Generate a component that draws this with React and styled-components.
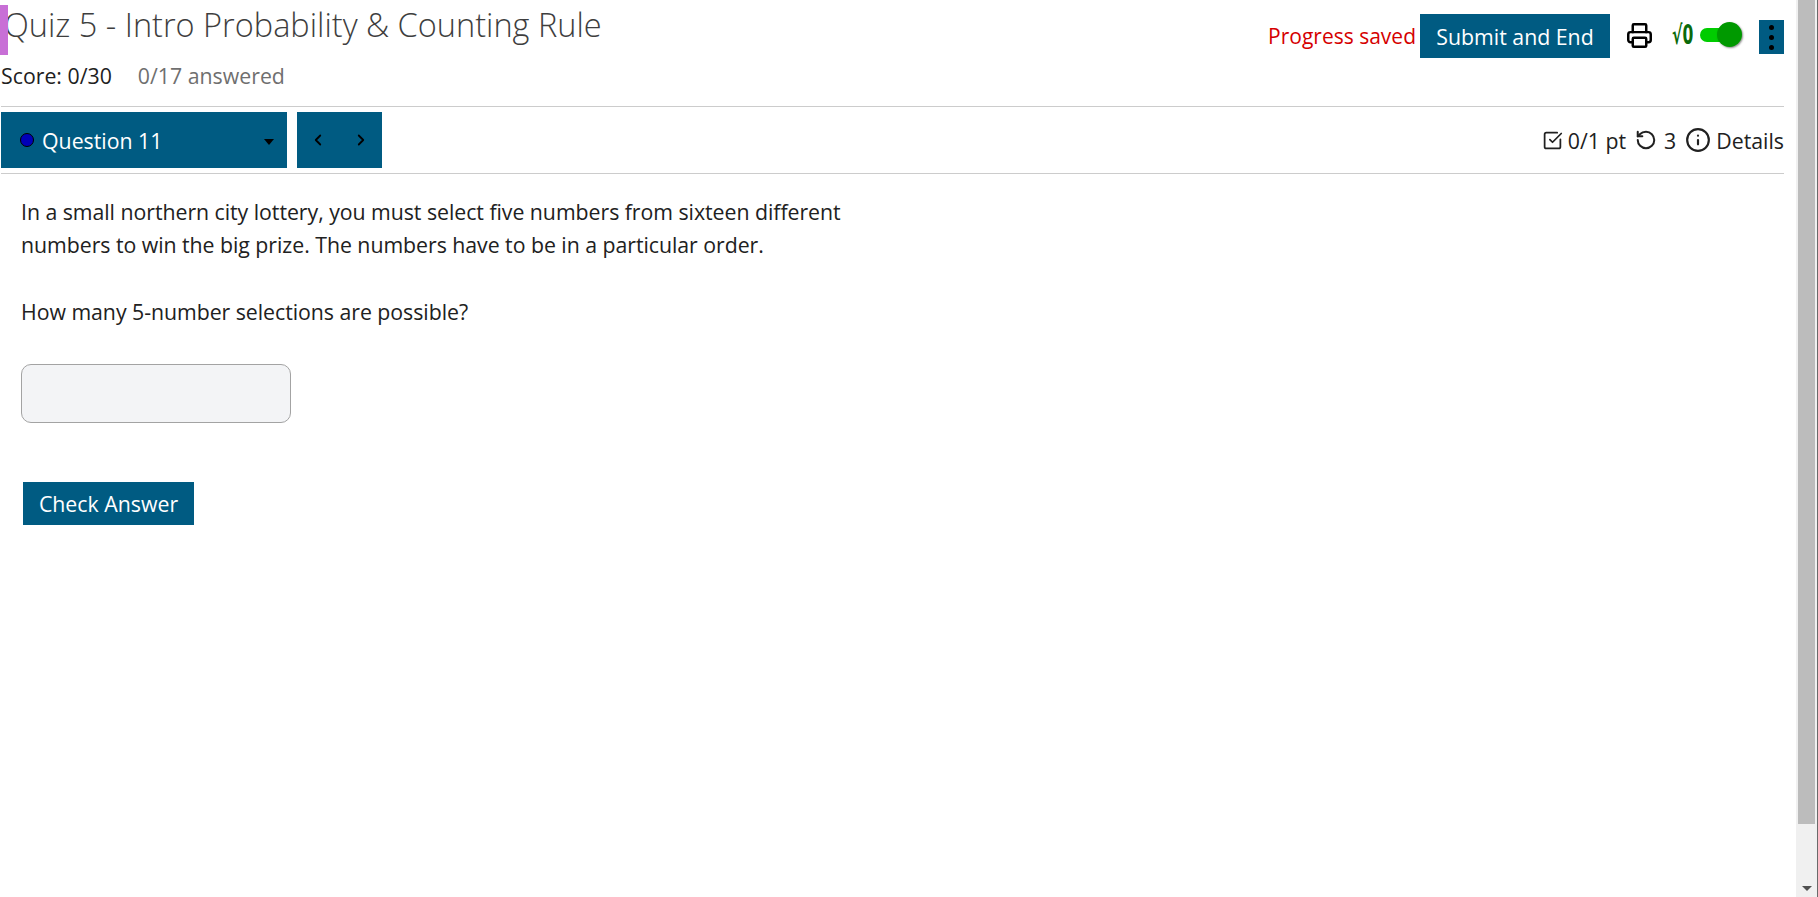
import React from 'react';
import styled, { createGlobalStyle } from 'styled-components';
import { Printer, SquareCheckBig, RotateCcw, Info, ChevronLeft, ChevronRight } from 'lucide-react';

const GlobalStyle = createGlobalStyle`
  html, body {
    margin: 0;
    padding: 0;
    height: 100%;
    overflow: hidden;
    background: #fff;
  }
  #root {
    height: 100%;
  }
`;

const Page = styled.div`
  display: flex;
  height: 897px;
  font-family: 'Open Sans', 'Noto Sans', sans-serif;
  color: #212121;
`;

const Main = styled.main`
  flex: 1;
  min-width: 0;
  padding: 0 12px 0 1px;
`;

const Header = styled.header`
  display: flex;
  justify-content: space-between;
  height: 106px;
  border-bottom: 1px solid #ccc;
`;

const TitleBlock = styled.div`
  padding-top: 5px;
`;

const Title = styled.h1`
  position: relative;
  margin: 0;
  height: 50px;
  padding-left: 3px;
  font-size: 32.5px;
  font-weight: 300;
  line-height: 40px;
  color: #3e3e3e;
  white-space: nowrap;

  &::before {
    content: '';
    position: absolute;
    left: -1px;
    top: 0;
    width: 8px;
    height: 50px;
    background: #c86fd6;
  }
`;

const ScoreLine = styled.div`
  display: flex;
  gap: 26px;
  margin-top: 8px;
  font-size: 21.3px;
  line-height: 26px;
`;

const Answered = styled.span`
  color: #6f6f6f;
`;

const Actions = styled.div`
  display: flex;
  align-items: flex-start;
  padding-top: 14px;
`;

const Saved = styled.span`
  margin-right: 4px;
  font-size: 21px;
  line-height: 44px;
  color: #d50000;
`;

const Button = styled.button`
  border: 0;
  padding: 0;
  background: #005b82;
  color: #fff;
  font-family: inherit;
  font-size: 21.3px;
`;

const SubmitButton = styled(Button)`
  width: 190px;
  height: 44px;
`;

const PrintIcon = styled(Printer)`
  margin: 8px 0 0 16px;
  color: #000;
`;

const MathToggle = styled.div`
  display: flex;
  align-items: center;
  margin: 7px 0 0 19px;
  height: 28px;
`;

const MathLabel = styled.span`
  width: 28px;
  font-family: 'DejaVu Sans', sans-serif;
  font-size: 26px;
  font-weight: 700;
  line-height: 28px;
  color: #0a6a0a;
  white-space: nowrap;
  transform: scaleX(0.6);
  transform-origin: left center;
`;

const Track = styled.div`
  position: relative;
  width: 35px;
  height: 14px;
  border-radius: 7px;
  background: #00cc00;
`;

const Thumb = styled.div`
  position: absolute;
  right: -7px;
  top: -6px;
  width: 25px;
  height: 25px;
  border-radius: 50%;
  background: #009900;
  box-shadow: 1px 1px 2px rgba(0, 0, 0, 0.45);
`;

const MenuButton = styled(Button)`
  display: flex;
  flex-direction: column;
  justify-content: center;
  align-items: center;
  gap: 5px;
  width: 25px;
  height: 34px;
  margin: 6px 0 0 24px;
`;

const Dot = styled.span`
  width: 5px;
  height: 5px;
  border-radius: 50%;
  background: #000;
`;

const QuestionBar = styled.div`
  display: flex;
  justify-content: space-between;
  align-items: flex-start;
  height: 61px;
  padding-top: 5px;
  border-bottom: 1px solid #ccc;
`;

const NavGroup = styled.div`
  display: flex;
  gap: 10px;
`;

const QuestionSelect = styled(Button)`
  display: flex;
  align-items: center;
  width: 286px;
  height: 56px;
  padding: 0 12px 0 19px;
`;

const StatusDot = styled.span`
  width: 14px;
  height: 14px;
  margin-right: 8px;
  box-sizing: border-box;
  border-radius: 50%;
  border: 1px solid #000;
  background: #0000b8;
`;

const Caret = styled.span`
  margin: 4px 1px 0 auto;
  border-left: 5px solid transparent;
  border-right: 5px solid transparent;
  border-top: 6px solid #000;
`;

const Arrows = styled(Button)`
  display: flex;
  align-items: center;
  justify-content: space-between;
  width: 85px;
  height: 56px;
  padding: 0 12px;
  color: #000;
`;

const Meta = styled.div`
  display: flex;
  align-items: center;
  height: 56px;
  font-size: 21.3px;
`;

const MetaItem = styled.span`
  display: flex;
  align-items: center;
  margin-left: ${(p) => p.$gap || 0}px;

  svg {
    margin-right: ${(p) => p.$iconGap || 5}px;
  }
`;

const Content = styled.section`
  padding: 21px 0 0 20px;
`;

const Prose = styled.p`
  margin: 0 0 34px;
  width: 850px;
  font-size: 21.3px;
  line-height: 33px;
  letter-spacing: -0.04px;
`;

const AnswerInput = styled.input`
  display: block;
  box-sizing: border-box;
  width: 270px;
  height: 59px;
  margin-top: 36px;
  border: 1px solid #a3a3a3;
  border-radius: 10px;
  background: #f3f4f6;
`;

const CheckButton = styled(Button)`
  display: block;
  width: 171px;
  height: 43px;
  margin: 59px 0 0 2px;
`;

const Scrollbar = styled.div`
  position: relative;
  flex: none;
  width: 22px;
  box-sizing: border-box;
  height: 100%;
  background: #f0f0f0;
  border-right: 1px solid #6a6a6a;
`;

const ScrollThumb = styled.div`
  position: absolute;
  left: 2px;
  top: 0;
  width: 17px;
  height: 824px;
  background: #bcbcbc;
`;

const ScrollArrow = styled.span`
  position: absolute;
  left: 6px;
  bottom: 6px;
  border-left: 5px solid transparent;
  border-right: 5px solid transparent;
  border-top: 5px solid #505050;
`;

const App = () => (
  <>
    <GlobalStyle />
    <Page>
      <Main>
        <Header>
          <TitleBlock>
            <Title>Quiz 5 - Intro Probability &amp; Counting Rule</Title>
            <ScoreLine>
              <span>Score: 0/30</span>
              <Answered>0/17 answered</Answered>
            </ScoreLine>
          </TitleBlock>
          <Actions>
            <Saved>Progress saved</Saved>
            <SubmitButton>Submit and End</SubmitButton>
            <PrintIcon size={27} strokeWidth={2.2} />
            <MathToggle>
              <MathLabel>√0</MathLabel>
              <Track>
                <Thumb />
              </Track>
            </MathToggle>
            <MenuButton aria-label="More">
              <Dot />
              <Dot />
              <Dot />
            </MenuButton>
          </Actions>
        </Header>
        <QuestionBar>
          <NavGroup>
            <QuestionSelect>
              <StatusDot />
              Question 11
              <Caret />
            </QuestionSelect>
            <Arrows aria-label="Previous and next">
              <ChevronLeft size={18} strokeWidth={2.4} />
              <ChevronRight size={18} strokeWidth={2.4} />
            </Arrows>
          </NavGroup>
          <Meta>
            <MetaItem>
              <SquareCheckBig size={21} />
              0/1 pt
            </MetaItem>
            <MetaItem $gap={9} $iconGap={7}>
              <RotateCcw size={22} strokeWidth={2.2} />
              3
            </MetaItem>
            <MetaItem $gap={9} $iconGap={5}>
              <Info size={26} />
              Details
            </MetaItem>
          </Meta>
        </QuestionBar>
        <Content>
          <Prose>
            In a small northern city lottery, you must select five numbers from sixteen different
            numbers to win the big prize. The numbers have to be in a particular order.
          </Prose>
          <Prose>How many 5-number selections are possible?</Prose>
          <AnswerInput aria-label="Answer" />
          <CheckButton>Check Answer</CheckButton>
        </Content>
      </Main>
      <Scrollbar>
        <ScrollThumb />
        <ScrollArrow />
      </Scrollbar>
    </Page>
  </>
);

export default App;
